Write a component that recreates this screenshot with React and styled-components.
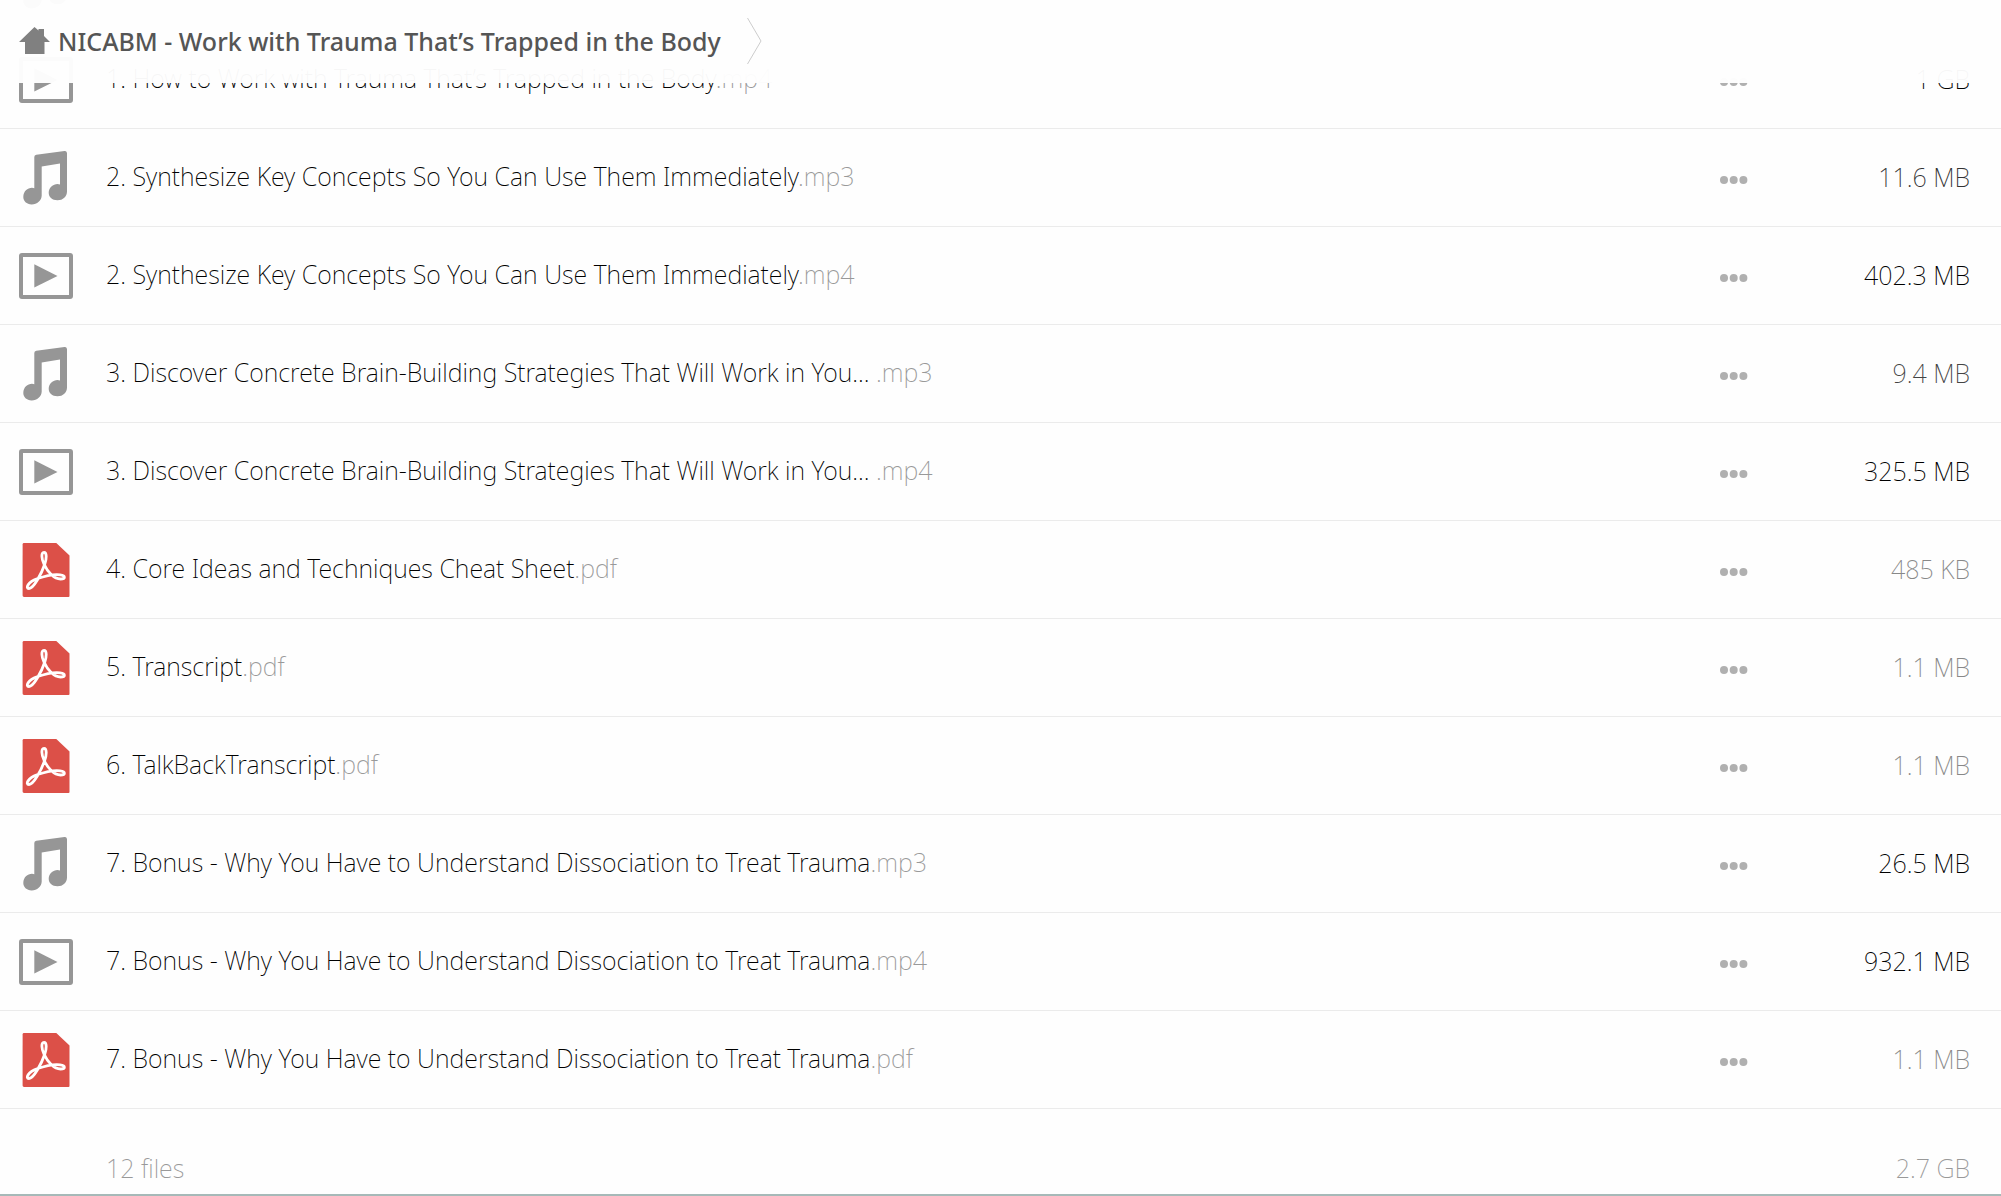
import React from 'react';
import styled, { createGlobalStyle } from 'styled-components';

const GlobalStyle = createGlobalStyle`
  * {
    box-sizing: border-box;
  }

  body {
    margin: 0;
    background-color: #fefefe;
    font-family: 'Noto Sans', 'Open Sans', sans-serif;
    font-size: 25px;
    line-height: 36px;
    color: #000;
  }
`;

const Page = styled.div`
  position: relative;
  display: flex;
  flex-direction: column;
  height: 100vh;
  border-bottom: 2px solid #a6b9b8;
`;

const Header = styled.header`
  position: absolute;
  top: 0;
  left: 0;
  right: 0;
  z-index: 1;
  display: flex;
  align-items: center;
  height: 83px;
  padding: 0 19px 2px;
  background-color: rgba(254, 254, 254, 0.97);
`;

const Crumb = styled.a`
  display: flex;
  align-items: center;
  gap: 8px;
  margin-right: 26px;
  font-weight: 500;
  color: #555;
  text-decoration: none;
`;

// column-reverse keeps the list scrolled to its end
const Scroller = styled.main`
  display: flex;
  flex: 1;
  flex-direction: column-reverse;
  min-height: 0;
  overflow-y: auto;
  scrollbar-width: none;
`;

const FileTable = styled.table`
  flex-shrink: 0;
  width: 100%;
  border-spacing: 0;
  table-layout: fixed;
  font-weight: 200;
`;

const Cell = styled.td`
  height: 98px;
  padding: 0;
  border-bottom: 1px solid #ebebeb;
`;

const IconCell = styled(Cell)`
  width: 106px;
  padding-left: 19px;

  svg {
    display: block;
  }
`;

const NameCell = styled(Cell)`
  padding-bottom: 3px;
`;

const MenuCell = styled(Cell)`
  width: 64px;
`;

const SizeCell = styled(Cell)`
  width: 236px;
  padding-right: 31px;
  padding-bottom: 1px;
  text-align: right;
  color: ${(props) => props.$color};
`;

const FileLink = styled.a`
  color: #000;
  text-decoration: none;
`;

const Extension = styled.span`
  color: #999;
`;

const MenuButton = styled.button`
  display: flex;
  padding: 12px 16px 8px 19px;
  border: 0;
  background: none;
  cursor: pointer;
`;

const TotalCell = styled.td`
  height: 85px;
  padding: 32px 31px 0 0;
  color: #999;
  text-align: ${(props) => props.$align || 'left'};
`;

const HomeIcon = () => (
  <svg width="31" height="28" viewBox="0 0 31 28" fill="#808080" aria-hidden="true">
    <path d="M15.5 0 19.5 3.6V2H25V9L31 15H25.5V27H6V15H0Z" />
  </svg>
);

const Chevron = () => (
  <svg width="15" height="46" viewBox="0 0 15 46" fill="none" stroke="#ccc" aria-hidden="true">
    <path d="M0.5 0 14 23 0.5 46" />
  </svg>
);

const AudioIcon = () => (
  <svg width="54" height="54" viewBox="0 0 54 54" fill="#969696" aria-hidden="true">
    <path d="M15.3 6Q15.3 4 17.3 3.7L45.5 0Q48 -.2 48 2.2V40.5C48 45.5 44 49.3 38.5 49.3C33 49.3 29.7 46 29.7 41.8C29.7 36.8 34 33 38.5 33Q40 33 41 33.4V12.4L22.7 15.6V44.5C22.7 49.5 18 53.4 12.7 53.4C7.5 53.4 4.3 50 4.3 46C4.3 40.5 8.5 36.8 13 36.8Q14.4 36.8 15.3 37.2Z" />
  </svg>
);

const VideoIcon = () => (
  <svg width="54" height="54" viewBox="0 0 54 54" fill="#969696" aria-hidden="true">
    <rect x="2" y="6" width="50" height="42" rx="1" fill="none" stroke="#969696" strokeWidth="4" />
    <path d="M15.3 15.3 38.5 27 15.3 38.5Z" />
  </svg>
);

const PdfIcon = () => (
  <svg width="54" height="54" viewBox="0 0 54 54" aria-hidden="true">
    <path fill="#dc5048" d="M5 0H37.3L50.5 12.6V53Q50.5 54 49.5 54H5Q3.6 54 3.6 52.6V1.4Q3.6 0 5 0Z" />
    <path
      fill="none"
      stroke="#fff"
      strokeWidth="2.8"
      strokeLinejoin="round"
      d="M25 21C22.4 16 22 9.3 25 9.3C28 9.3 27.6 16 25.8 21C22.5 31 14.5 45.5 10 45.5C6 45.5 9 39 18 35.8C26 33 35 31 41 31.8C47 32.5 46.5 36 41.5 36C35 36 28.5 29 25 21Z"
    />
  </svg>
);

const DotsIcon = () => (
  <svg width="28" height="8" viewBox="0 0 28 8" fill="#b0b0b0" aria-hidden="true">
    <circle cx="4" cy="4" r="4" />
    <circle cx="13.7" cy="4" r="4" />
    <circle cx="23.4" cy="4" r="4" />
  </svg>
);

const icons = {
  mp3: AudioIcon,
  mp4: VideoIcon,
  pdf: PdfIcon,
};

const files = [
  { name: '1. How to Work with Trauma That’s Trapped in the Body', ext: 'mp3', size: '28.4 MB', color: '#000' },
  { name: '1. How to Work with Trauma That’s Trapped in the Body', ext: 'mp4', size: '1 GB', color: '#000' },
  { name: '2. Synthesize Key Concepts So You Can Use Them Immediately', ext: 'mp3', size: '11.6 MB', color: '#333' },
  { name: '2. Synthesize Key Concepts So You Can Use Them Immediately', ext: 'mp4', size: '402.3 MB', color: '#000' },
  { name: '3. Discover Concrete Brain-Building Strategies That Will Work in You... ', ext: 'mp3', size: '9.4 MB', color: '#444' },
  { name: '3. Discover Concrete Brain-Building Strategies That Will Work in You... ', ext: 'mp4', size: '325.5 MB', color: '#000' },
  { name: '4. Core Ideas and Techniques Cheat Sheet', ext: 'pdf', size: '485 KB', color: '#888' },
  { name: '5. Transcript', ext: 'pdf', size: '1.1 MB', color: '#888' },
  { name: '6. TalkBackTranscript', ext: 'pdf', size: '1.1 MB', color: '#888' },
  { name: '7. Bonus - Why You Have to Understand Dissociation to Treat Trauma', ext: 'mp3', size: '26.5 MB', color: '#000' },
  { name: '7. Bonus - Why You Have to Understand Dissociation to Treat Trauma', ext: 'mp4', size: '932.1 MB', color: '#000' },
  { name: '7. Bonus - Why You Have to Understand Dissociation to Treat Trauma', ext: 'pdf', size: '1.1 MB', color: '#888' },
];

const FileRow = ({ file }) => {
  const Icon = icons[file.ext];

  return (
    <tr>
      <IconCell>
        <Icon />
      </IconCell>
      <NameCell>
        <FileLink href="#">
          {file.name}
          <Extension>.{file.ext}</Extension>
        </FileLink>
      </NameCell>
      <MenuCell>
        <MenuButton type="button" aria-label="File actions">
          <DotsIcon />
        </MenuButton>
      </MenuCell>
      <SizeCell $color={file.color}>{file.size}</SizeCell>
    </tr>
  );
};

const App = () => (
  <>
    <GlobalStyle />
    <Page>
      <Header>
        <Crumb href="#">
          <HomeIcon />
          NICABM - Work with Trauma That’s Trapped in the Body
        </Crumb>
        <Chevron />
      </Header>
      <Scroller>
        <FileTable>
          <tbody>
            {files.map((file) => (
              <FileRow key={file.name + file.ext} file={file} />
            ))}
          </tbody>
          <tfoot>
            <tr>
              <TotalCell />
              <TotalCell>12 files</TotalCell>
              <TotalCell />
              <TotalCell $align="right">2.7 GB</TotalCell>
            </tr>
          </tfoot>
        </FileTable>
      </Scroller>
    </Page>
  </>
);

export default App;
